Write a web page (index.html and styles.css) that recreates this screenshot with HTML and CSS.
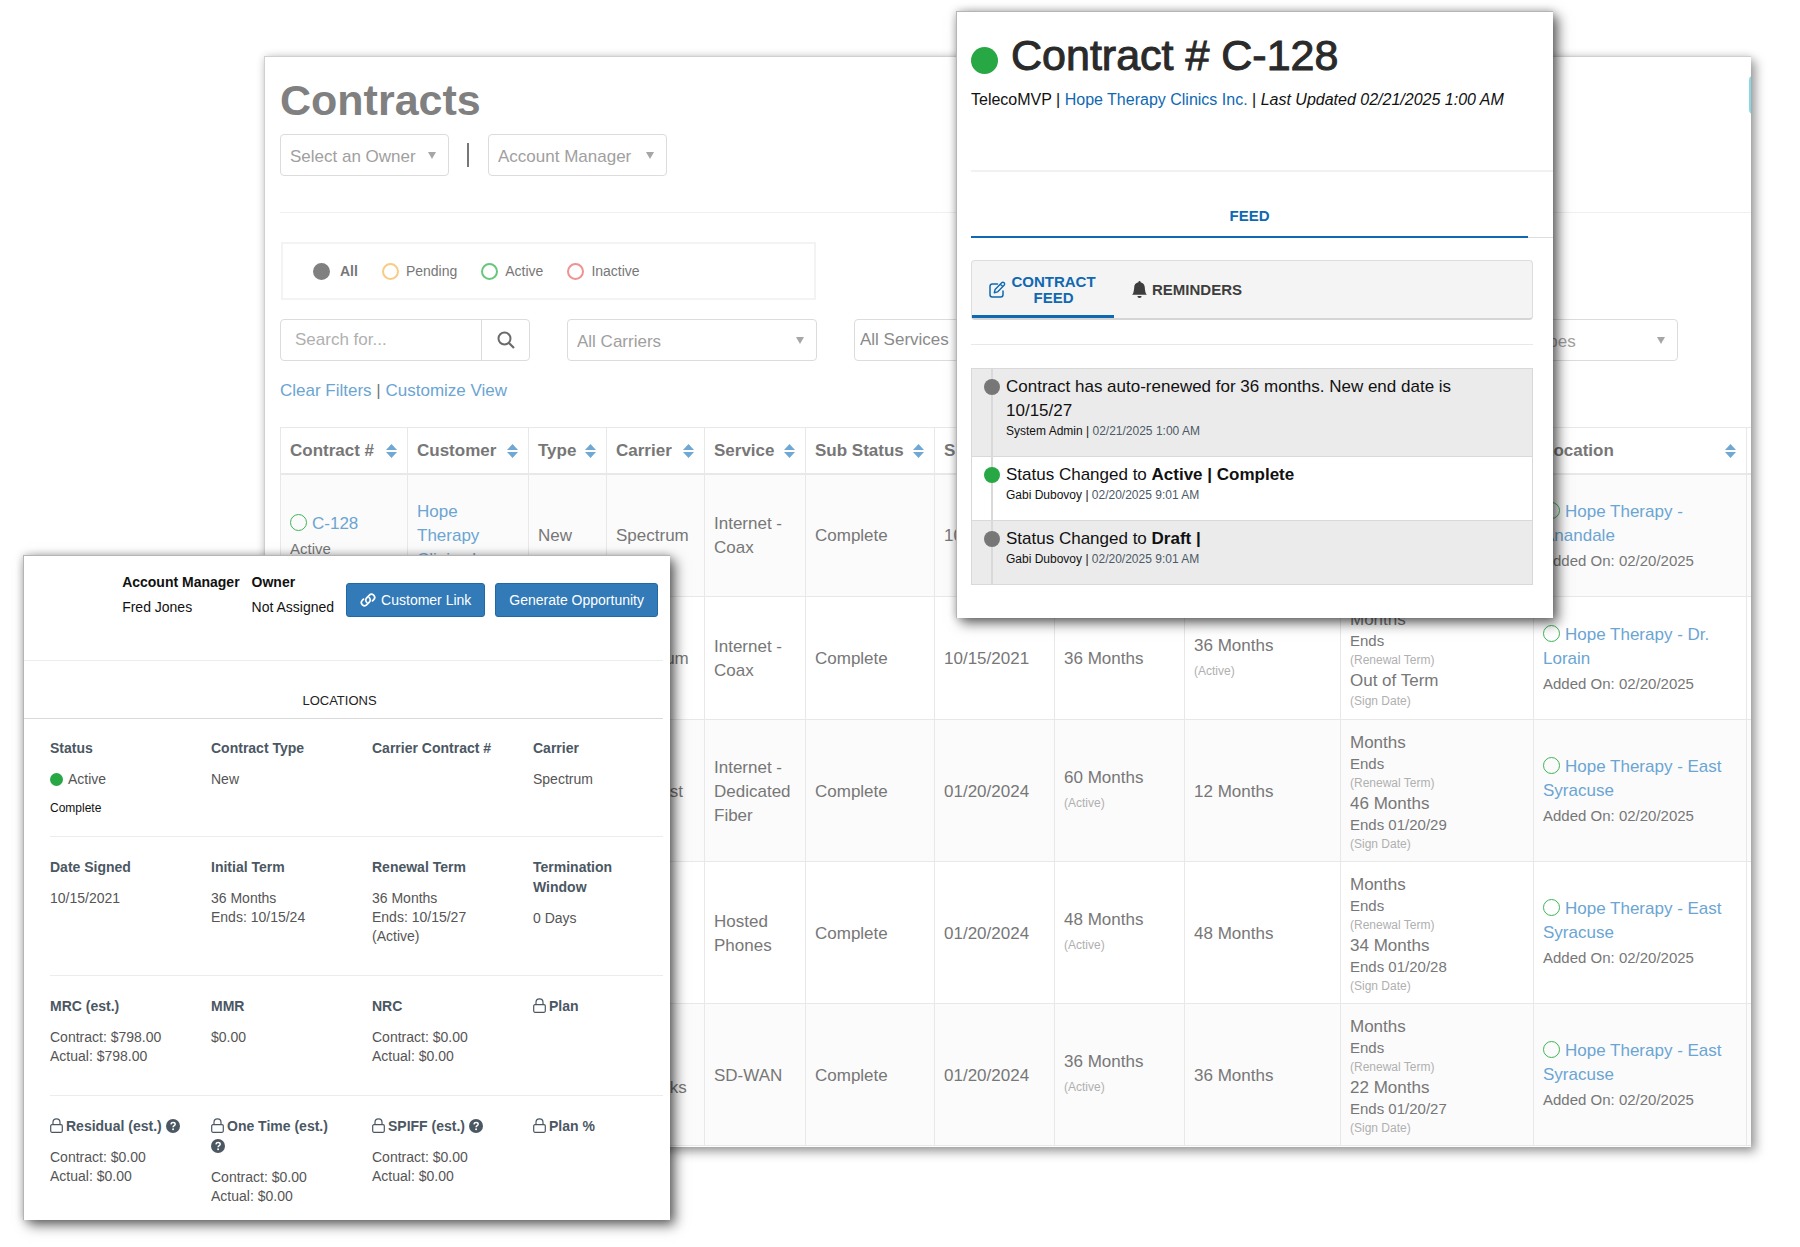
FILE: index.html
```html
<!DOCTYPE html>
<html lang="en">
<head>
<meta charset="utf-8">
<title>Contracts</title>
<link rel="stylesheet" href="styles.css">
</head>
<body>
<svg class="sprite" aria-hidden="true">
  <symbol id="sort" viewBox="0 0 11 14"><path d="M5.500 0 11 6H0zM5.500 14 0 8h11z" fill="currentColor"/></symbol>
  <symbol id="caret" viewBox="0 0 8 7"><path d="M0 0h8L4 7z" fill="currentColor"/></symbol>
  <symbol id="search" viewBox="0 0 18 18"><circle cx="7.500" cy="7.500" r="6" fill="none" stroke="currentColor" stroke-width="2"/><path d="m12 12 5 5" stroke="currentColor" stroke-width="2.200"/></symbol>
  <symbol id="pencil" viewBox="0 0 17 17"><path d="M8.500 3H3.200A2.200 2.200 0 0 0 1 5.200v8.600A2.200 2.200 0 0 0 3.200 16h8.600a2.200 2.200 0 0 0 2.200-2.200V10" fill="none" stroke="currentColor" stroke-width="1.500" stroke-linecap="round"/><path d="m5.300 11.700.8-3.200 6.600-6.700a1.600 1.600 0 0 1 2.400 2.400l-6.600 6.700zM11.300 3.200l2.400 2.400" fill="none" stroke="currentColor" stroke-width="1.400" stroke-linejoin="round"/></symbol>
  <symbol id="bell" viewBox="0 0 16 16"><path fill="currentColor" d="M8 16a2 2 0 0 0 2-2H6a2 2 0 0 0 2 2zm.995-14.901a1 1 0 1 0-1.990 0A5.002 5.002 0 0 0 3 6c0 1.098-.5 6-2 7h14c-1.500-1-2-5.902-2-7 0-2.420-1.720-4.440-4.005-4.901z"/></symbol>
  <symbol id="link" viewBox="0 0 16 14"><g fill="none" stroke="currentColor" stroke-width="1.700" stroke-linecap="round"><path d="M6.800 9.400a3 3 0 0 1-.3-4.300l2.700-2.800a3.100 3.100 0 0 1 4.500 4.300l-1.200 1.300"/><path d="M9.200 4.600a3 3 0 0 1 .3 4.300l-2.700 2.800a3.100 3.100 0 0 1-4.500-4.300l1.200-1.300"/></g></symbol>
  <symbol id="lock" viewBox="0 0 13 15"><rect x=".7" y="6.700" width="11.600" height="7.600" rx="1.200" fill="none" stroke="currentColor" stroke-width="1.200"/><path d="M3 6.500V4.300a3.500 3.500 0 0 1 7 0v2.200" fill="none" stroke="currentColor" stroke-width="1.200"/></symbol>
  <symbol id="help" viewBox="0 0 14 14"><circle cx="7" cy="7" r="7" fill="currentColor"/><path d="M4.900 5.300c.2-1.200 1-1.800 2.200-1.800 1.200 0 2.100.7 2.100 1.700 0 1.500-2.100 1.400-2.100 3" fill="none" stroke="#fff" stroke-width="1.500"/><circle cx="7.100" cy="10.200" r=".95" fill="#fff"/></symbol>
</svg>

<main class="contracts">
  <header class="page-head">
    <h1>Contracts</h1>
    <button type="button" class="new-contract" aria-label="New contract"></button>
  </header>
  <div class="owners">
    <div class="pick owner"><select aria-label="Owner"><option>Select an Owner</option></select><svg class="caret"><use href="#caret"/></svg></div>
    <span class="bar"></span>
    <div class="pick manager"><select aria-label="Account manager"><option>Account Manager</option></select><svg class="caret"><use href="#caret"/></svg></div>
  </div>
  <div class="statuses">
    <label class="all"><input type="radio" name="status" checked>All</label>
    <label class="pending"><input type="radio" name="status">Pending</label>
    <label class="active"><input type="radio" name="status">Active</label>
    <label class="inactive"><input type="radio" name="status">Inactive</label>
  </div>
  <div class="filters">
    <form class="search">
      <input type="text" placeholder="Search for..." aria-label="Search">
      <button type="button" aria-label="Search"><svg><use href="#search"/></svg></button>
    </form>
    <div class="pick"><select aria-label="Carriers"><option>All Carriers</option></select><svg class="caret"><use href="#caret"/></svg></div>
    <div class="pick snug"><select aria-label="Services"><option>All Services</option></select><svg class="caret"><use href="#caret"/></svg></div>
    <div class="pick"><select aria-label="Statuses"><option>All Statuses</option></select><svg class="caret"><use href="#caret"/></svg></div>
    <div class="pick"><select aria-label="Contract types"><option>All Contract Types</option></select><svg class="caret"><use href="#caret"/></svg></div>
  </div>
  <p class="views"><a href="#">Clear Filters</a> | <a href="#">Customize View</a></p>

  <table>
    <colgroup>
      <col class="c-number"><col class="c-customer"><col class="c-type"><col class="c-carrier"><col class="c-service"><col class="c-sub"><col class="c-date"><col class="c-initial"><col class="c-renewal"><col class="c-left"><col><col class="c-more">
    </colgroup>
    <thead>
      <tr>
        <th><span>Contract # <svg><use href="#sort"/></svg></span></th>
        <th><span>Customer <svg><use href="#sort"/></svg></span></th>
        <th><span>Type <svg><use href="#sort"/></svg></span></th>
        <th><span>Carrier <svg><use href="#sort"/></svg></span></th>
        <th><span>Service <svg><use href="#sort"/></svg></span></th>
        <th><span>Sub Status <svg><use href="#sort"/></svg></span></th>
        <th><span>Signed <svg><use href="#sort"/></svg></span></th>
        <th><span>Initial <svg><use href="#sort"/></svg></span></th>
        <th><span>Renewal <svg><use href="#sort"/></svg></span></th>
        <th><span>Remaining <svg><use href="#sort"/></svg></span></th>
        <th><span>Location <svg><use href="#sort"/></svg></span></th>
        <th></th>
      </tr>
    </thead>
    <tbody>
      <tr>
        <td><i class="ring"></i><a href="#">C-128</a><small>Active</small></td>
        <td><a href="#">Hope Therapy Clinics Inc.</a></td>
        <td>New</td><td>Spectrum</td><td>Internet - Coax</td><td>Complete</td><td>10/15/2021</td>
        <td>36 Months</td>
        <td>36 Months<em>(Active)</em></td>
        <td class="left"><b>Months</b><small>Ends</small><em>(Renewal Term)</em><b>Out of Term</b><em>(Sign Date)</em></td>
        <td><i class="ring"></i><a href="#">Hope Therapy - Anandale</a><small>Added On: 02/20/2025</small></td>
        <td></td>
      </tr>
      <tr>
        <td><i class="ring"></i><a href="#">C-127</a><small>Active</small></td>
        <td><a href="#">Hope Therapy Clinics Inc.</a></td>
        <td>New</td><td>Spectrum</td><td>Internet - Coax</td><td>Complete</td><td>10/15/2021</td>
        <td>36 Months</td>
        <td>36 Months<em>(Active)</em></td>
        <td class="left"><b>Months</b><small>Ends</small><em>(Renewal Term)</em><b>Out of Term</b><em>(Sign Date)</em></td>
        <td><i class="ring"></i><a href="#">Hope Therapy - Dr. Lorain</a><small>Added On: 02/20/2025</small></td>
        <td></td>
      </tr>
      <tr>
        <td><i class="ring"></i><a href="#">C-126</a><small>Active</small></td>
        <td><a href="#">Hope Therapy Clinics Inc.</a></td>
        <td>New</td><td>Comcast</td><td>Internet - Dedicated Fiber</td><td>Complete</td><td>01/20/2024</td>
        <td>60 Months<em>(Active)</em></td>
        <td>12 Months</td>
        <td class="left"><b>Months</b><small>Ends</small><em>(Renewal Term)</em><b>46 Months</b><small>Ends 01/20/29</small><em>(Sign Date)</em></td>
        <td><i class="ring"></i><a href="#">Hope Therapy - East Syracuse</a><small>Added On: 02/20/2025</small></td>
        <td></td>
      </tr>
      <tr>
        <td><i class="ring"></i><a href="#">C-125</a><small>Active</small></td>
        <td><a href="#">Hope Therapy Clinics Inc.</a></td>
        <td>New</td><td>Zoom</td><td>Hosted Phones</td><td>Complete</td><td>01/20/2024</td>
        <td>48 Months<em>(Active)</em></td>
        <td>48 Months</td>
        <td class="left"><b>Months</b><small>Ends</small><em>(Renewal Term)</em><b>34 Months</b><small>Ends 01/20/28</small><em>(Sign Date)</em></td>
        <td><i class="ring"></i><a href="#">Hope Therapy - East Syracuse</a><small>Added On: 02/20/2025</small></td>
        <td></td>
      </tr>
      <tr>
        <td><i class="ring"></i><a href="#">C-124</a><small>Active</small></td>
        <td><a href="#">Hope Therapy Clinics Inc.</a></td>
        <td>New</td><td>Cato Networks</td><td>SD-WAN</td><td>Complete</td><td>01/20/2024</td>
        <td>36 Months<em>(Active)</em></td>
        <td>36 Months</td>
        <td class="left"><b>Months</b><small>Ends</small><em>(Renewal Term)</em><b>22 Months</b><small>Ends 01/20/27</small><em>(Sign Date)</em></td>
        <td><i class="ring"></i><a href="#">Hope Therapy - East Syracuse</a><small>Added On: 02/20/2025</small></td>
        <td></td>
      </tr>
    </tbody>
  </table>
</main>

<section class="window feed">
  <header>
    <h2><i class="dot"></i>Contract # C-128</h2>
    <p>TelecoMVP | <a href="#">Hope Therapy Clinics Inc.</a> | <i>Last Updated 02/21/2025 1:00 AM</i></p>
  </header>
  <nav class="main-tabs"><a href="#">FEED</a></nav>
  <div class="feed-body">
    <nav class="sub-tabs">
      <button type="button" class="current"><svg><use href="#pencil"/></svg><span>CONTRACT FEED</span></button>
      <button type="button"><svg><use href="#bell"/></svg><span>REMINDERS</span></button>
    </nav>
    <hr>
    <ol>
      <li><i class="dot"></i><p>Contract has auto-renewed for 36 months. New end date is 10/15/27</p><small>System Admin | <time>02/21/2025 1:00 AM</time></small></li>
      <li class="ok"><i class="dot"></i><p>Status Changed to <b>Active | Complete</b></p><small>Gabi Dubovoy | <time>02/20/2025 9:01 AM</time></small></li>
      <li><i class="dot"></i><p>Status Changed to <b>Draft |</b></p><small>Gabi Dubovoy | <time>02/20/2025 9:01 AM</time></small></li>
    </ol>
  </div>
</section>

<section class="window details">
  <header>
    <dl><dt>Account Manager</dt><dd>Fred Jones</dd></dl>
    <dl><dt>Owner</dt><dd>Not Assigned</dd></dl>
    <div class="actions">
      <button type="button"><svg><use href="#link"/></svg>Customer Link</button>
      <button type="button">Generate Opportunity</button>
    </div>
  </header>
  <nav><a href="#">LOCATIONS</a></nav>
  <div class="facts">
    <div class="row">
      <dl><dt>Status</dt><dd><i class="dot"></i>Active</dd><dd class="sub">Complete</dd></dl>
      <dl><dt>Contract Type</dt><dd>New</dd></dl>
      <dl><dt>Carrier Contract #</dt></dl>
      <dl><dt>Carrier</dt><dd>Spectrum</dd></dl>
    </div>
    <div class="row">
      <dl><dt>Date Signed</dt><dd>10/15/2021</dd></dl>
      <dl><dt>Initial Term</dt><dd>36 Months</dd><dd>Ends: 10/15/24</dd></dl>
      <dl><dt>Renewal Term</dt><dd>36 Months</dd><dd>Ends: 10/15/27</dd><dd>(Active)</dd></dl>
      <dl><dt>Termination Window</dt><dd>0 Days</dd></dl>
    </div>
    <div class="row">
      <dl><dt>MRC (est.)</dt><dd>Contract: $798.00</dd><dd>Actual: $798.00</dd></dl>
      <dl><dt>MMR</dt><dd>$0.00</dd></dl>
      <dl><dt>NRC</dt><dd>Contract: $0.00</dd><dd>Actual: $0.00</dd></dl>
      <dl><dt><svg class="lock"><use href="#lock"/></svg>Plan</dt></dl>
    </div>
    <div class="row">
      <dl><dt><svg class="lock"><use href="#lock"/></svg>Residual (est.) <svg class="help"><use href="#help"/></svg></dt><dd>Contract: $0.00</dd><dd>Actual: $0.00</dd></dl>
      <dl><dt><svg class="lock"><use href="#lock"/></svg>One Time (est.) <svg class="help"><use href="#help"/></svg></dt><dd>Contract: $0.00</dd><dd>Actual: $0.00</dd></dl>
      <dl><dt><svg class="lock"><use href="#lock"/></svg>SPIFF (est.) <svg class="help"><use href="#help"/></svg></dt><dd>Contract: $0.00</dd><dd>Actual: $0.00</dd></dl>
      <dl><dt><svg class="lock"><use href="#lock"/></svg>Plan %</dt></dl>
    </div>
  </div>
</section>
</body>
</html>
```
FILE: styles.css
```css
* { box-sizing: border-box; }

body {
  position: relative;
  margin: 0;
  padding: 56px 49px 100px 264px;
  background: #fff;
  font: 17px/24px "Liberation Sans", Arial, sans-serif;
}

h1, h2, p, dl, dd, ol { margin: 0; padding: 0; }
ol { list-style: none; }
a { text-decoration: none; }
button, input, select { font: inherit; }
.sprite { display: none; }

/* Contracts list */
.contracts {
  overflow: hidden;
  padding: 17px 0 0 15px;
  border: 1px solid #d0d0d0;
  border-width: 1px 0 0 1px;
  background: #fff;
  box-shadow: 5px 5px 10px rgba(0, 0, 0, .35), 0 0 8px rgba(0, 0, 0, .15);
  color: #777;
}
.contracts a { color: #6ba5d3; }

.page-head { display: flex; justify-content: space-between; }
h1 {
  color: #808080;
  font-size: 43px;
  font-weight: 700;
  line-height: 52px;
}
.new-contract {
  width: 60px;
  height: 38px;
  margin: 2px -58px 0 0;
  border: 0;
  border-radius: 4px;
  background: #85d9ea;
}

.pick { display: grid; align-items: center; }
.pick select, .pick .caret { grid-area: 1 / 1; }
.pick select {
  width: 100%;
  height: 42px;
  padding: 3px 9px 0;
  appearance: none;
  border: 1px solid #dcdcdc;
  border-radius: 4px;
  background: #fff;
  color: #a0a0a0;
}
.pick.snug select { padding: 0 5px; color: #8a8a8a; }
.caret {
  justify-self: end;
  width: 8px;
  height: 7px;
  margin-right: 13px;
  color: #a6a6a6;
  pointer-events: none;
}

.owners {
  display: flex;
  align-items: center;
  margin-top: 8px;
  padding-bottom: 36px;
  border-bottom: 1px solid #f0f0f0;
}
.owner { width: 169px; }
.manager { width: 179px; }
.bar { width: 2px; height: 24px; margin: 0 19px 0 18px; background: #777; }

.statuses {
  display: flex;
  align-items: center;
  gap: 24px;
  width: 535px;
  height: 58px;
  margin: 29px 0 19px 1px;
  padding-left: 30px;
  border: 2px solid #f3f3f3;
  font-size: 14px;
}
.statuses label { display: flex; align-items: center; gap: 7px; }
.statuses input {
  width: 17px;
  height: 17px;
  margin: 0;
  appearance: none;
  border: 2px solid #808080;
  border-radius: 50%;
}
.statuses input:checked { background: #808080; }
.statuses .all { gap: 10px; font-weight: 700; }
.statuses .pending input { border-color: #f9cb85; }
.statuses .active input { border-color: #68c77c; }
.statuses .inactive input { border-color: #ee9292; }

.filters { display: grid; grid-template-columns: repeat(5, 250px); gap: 37px; }
.search {
  display: flex;
  height: 42px;
  border: 1px solid #dcdcdc;
  border-radius: 4px;
}
.search input {
  flex: 1;
  min-width: 0;
  padding: 0 14px;
  border: 0;
  background: none;
}
.search input::placeholder { color: #b0b0b0; }
.search button {
  display: grid;
  place-items: center;
  width: 48px;
  padding: 0;
  border: 0;
  border-left: 1px solid #dcdcdc;
  background: none;
  color: #6a6a6a;
}
.search svg { width: 18px; height: 18px; }
.views { margin: 18px 0 24px; }

/* Contracts table */
table {
  width: calc(100% + 20px);
  table-layout: fixed;
  border-collapse: collapse;
  margin-bottom: 1px;
}
.c-number { width: 127px; }
.c-customer { width: 121px; }
.c-type { width: 78px; }
.c-carrier { width: 98px; }
.c-service { width: 101px; }
.c-sub { width: 129px; }
.c-date { width: 120px; }
.c-initial { width: 130px; }
.c-renewal { width: 156px; }
.c-left { width: 193px; }
.c-more { width: 24px; }
th, td { padding: 2px 9px 0; border: 1px solid #e8e8e8; text-align: left; }
th { height: 46px; padding: 1px 10px 0 9px; border-bottom-width: 2px; white-space: nowrap; }
th span { display: flex; align-items: center; justify-content: space-between; }
th svg { flex: none; width: 11px; height: 14px; color: #6fa8d4; }
td { height: 123px; }
tbody tr:nth-child(n+3) td { height: 142px; }
tbody tr:nth-child(odd) { background: #fbfbfb; }
td small, td em, td b { display: block; font-weight: 400; font-style: normal; }
td small { font-size: 15px; line-height: 25px; }
td em { color: #b0b0b0; font-size: 12px; line-height: 27px; }
.left b { line-height: 23px; }
.left small { line-height: 20px; }
.left em { line-height: 18px; }
.ring {
  display: inline-block;
  width: 17px;
  height: 17px;
  margin-right: 5px;
  border: 1px solid #3db557;
  border-radius: 50%;
  vertical-align: -2px;
}

/* Floating windows */
.window {
  position: absolute;
  border: 1px solid #b5b5b5;
  border-width: 1px 0 0 1px;
  background: #fff;
  box-shadow: 5px 5px 12px rgba(0, 0, 0, .6), 0 0 8px rgba(0, 0, 0, .2);
}
.dot {
  display: inline-block;
  border-radius: 50%;
  background: #28a745;
}

/* Contract feed */
.feed {
  top: 11px;
  right: 247px;
  width: 597px;
  padding: 16px 0 33px 14px;
  color: #111;
}
.feed a { color: #0f68b2; }
.feed header { padding-bottom: 58px; border-bottom: 2px solid #f1f1f1; }
.feed h2 {
  display: flex;
  align-items: center;
  gap: 13px;
  color: #2a2a2a;
  font-size: 43px;
  font-weight: 400;
  line-height: 54px;
  -webkit-text-stroke: 1px #2a2a2a;
}
.feed h2 .dot { width: 27px; height: 27px; margin-top: 10px; }
.feed header p { margin-top: 6px; font-size: 16px; }
.main-tabs { padding-right: 25px; border-bottom: 1px solid #ddd; }
.main-tabs a {
  display: block;
  margin-bottom: -1px;
  padding: 32px 0 8px;
  border-bottom: 2px solid #0f68b2;
  font-size: 15px;
  font-weight: 700;
  text-align: center;
}
.feed-body { padding: 22px 20px 0 0; }
.sub-tabs {
  display: flex;
  height: 60px;
  border: 1px solid #ddd;
  border-bottom: 2px solid #d5d5d5;
  border-radius: 4px;
  background: #f4f4f4;
}
.sub-tabs button {
  display: flex;
  align-items: center;
  gap: 4px;
  width: 142px;
  padding: 3px 17px 0;
  border: 0;
  border-bottom: 3px solid transparent;
  background: none;
  color: #3d3d3d;
  font-size: 15px;
  font-weight: 700;
  line-height: 16px;
}
.sub-tabs .current { border-color: #0f68b2; color: #0f68b2; }
.sub-tabs svg { flex: none; width: 17px; height: 17px; }
.feed hr { margin: 24px 0 23px; border: 0; border-top: 1px solid #e8e8e8; }
.feed ol { border: 1px solid #d9d9d9; }
.feed li {
  display: grid;
  grid-template-columns: 16px 1fr;
  column-gap: 6px;
  padding: 6px 60px 17px 12px;
  background: linear-gradient(#d9d9d9, #d9d9d9) 19px 0 / 2px 100% no-repeat #ebebeb;
}
.feed li + li { border-top: 1px solid #d9d9d9; }
.feed li.ok { background-color: #fff; }
.feed li .dot { width: 16px; height: 16px; margin-top: 4px; background: #777; }
.feed li.ok .dot { background: #28a745; }
.feed li small { grid-column: 2; font-size: 12px; line-height: 16px; }
.feed time { color: #4c5a67; }

/* Contract details */
.details {
  top: 555px;
  left: 23px;
  width: 647px;
  padding: 0 7px 14px 0;
  color: #555;
  font-size: 14px;
  line-height: 20px;
}
.details header {
  display: flex;
  justify-content: flex-end;
  gap: 12px;
  padding: 16px 5px 43px 0;
  border-bottom: 1px solid #ececec;
  color: #111;
}
.details header dd { margin-top: 5px; }
.details dt { font-weight: 700; }
.actions { display: flex; gap: 10px; padding-top: 11px; }
.actions button {
  display: flex;
  align-items: center;
  gap: 5px;
  height: 34px;
  padding: 0 13px;
  border: 1px solid #2169a6;
  border-radius: 3px;
  background: #327ab8;
  color: #fff;
}
.actions svg { width: 16px; height: 14px; }
.details nav {
  padding: 29px 8px 7px 0;
  border-bottom: 1px solid #d9d9d9;
  text-align: center;
}
.details nav a { color: #222; font-size: 13px; }
.facts { padding-left: 26px; }
.row {
  display: grid;
  grid-template-columns: repeat(3, 161px) 1fr;
  padding: 20px 0 29px;
}
.row:first-child { padding: 19px 0 18px; }
.row:last-child { padding-bottom: 0; }
.row + .row { border-top: 1px solid #ececec; }
.row dl:not(:last-child) { padding-right: 28px; }
.row dt { margin-bottom: 12px; color: #4b5763; }
.row dd { line-height: 19px; }
.row .dot { width: 13px; height: 13px; margin-right: 5px; vertical-align: -2px; }
.row .sub { margin-top: 10px; color: #111; font-size: 12px; }
.lock { width: 13px; height: 15px; margin-right: 3px; vertical-align: -2px; }
.help { width: 14px; height: 14px; vertical-align: -2px; }
```
